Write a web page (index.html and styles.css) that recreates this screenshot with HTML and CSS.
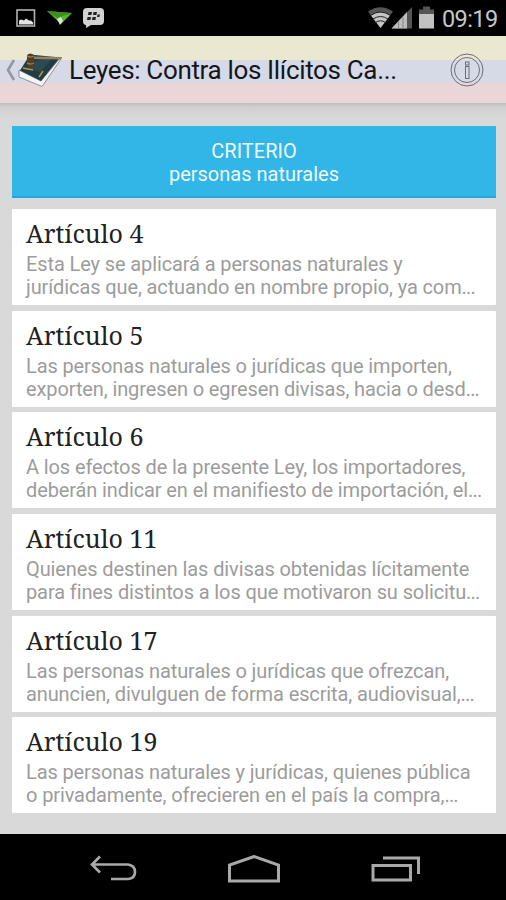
FILE: index.html
```html
<!DOCTYPE html>
<html lang="es">
<head>
    <meta charset="UTF-8">
    <meta name="viewport" content="width=device-width, initial-scale=1.0">
    <title>Leyes</title>
    <link rel="stylesheet" href="styles.css">
</head>
<body>
    <div class="status-bar">
        <svg class="status-left" width="110" height="36" viewBox="0 0 110 36">
            <rect x="17" y="10" width="17.500" height="16" fill="none" stroke="#b4b4b4" stroke-width="1.6"/>
            <path d="M19 24.500v-4l2-1 3 1 2-2 3 2 2 0 2 2v2z" fill="#e4e4e4"/>
            <path d="M47 11l25 2-11 11z" fill="#54b52c"/>
            <path d="M47 11l25 2-15 5z" fill="#3d8d20"/>
            <path d="M57 19l4-2 2 4-3 4z" fill="#d5e8d0"/>
            <path d="M87 8h13q4 0 4 4v9q0 4-4 4h-9l-5 3v-3q-3 0-3-4v-9q0-4 4-4z" fill="#d2d2d2"/>
            <path d="M88.500 12h3.500l-.6 3H88zM93.500 12H97l-.6 3H93zM87.500 17H91l-.6 3H87zM92.500 17H96l-.6 3H92zM97.500 14.500h2.500l-.6 2.500H97z" fill="#222"/>
        </svg>
        <div class="status-right">
            <svg width="72" height="36" viewBox="0 0 72 36">
                <path d="M2 11.500Q14.500 3 27 11.500L14.500 28z" fill="#555"/>
                <path d="M5 15.500Q14.500 9 24 15.500L14.500 28z" fill="#c4c4c4"/>
                <path d="M4.500 15.500Q14.500 8.500 24.500 15.500M7 19Q14.500 14 22 19M9.500 22.500Q14.500 19 19.500 22.500" fill="none" stroke="#222" stroke-width="1"/>
                <path d="M25.500 28.500L46 7v21.500z" fill="#555"/>
                <path d="M25.500 28.500L41 12v16.500z" fill="#bdbdbd"/>
                <path d="M32.500 21v7.500M37 17v11.500" stroke="#888" stroke-width="1"/>
                <path d="M57 6.500h7v3h4v5H53v-5h4z" fill="#555"/>
                <path d="M53 14h15v14.500H53z" fill="#c2c2c2"/>
            </svg>
            <span class="clock">09:19</span>
        </div>
    </div>

    <header class="action-bar">
        <svg class="logo" width="66" height="67" viewBox="0 0 66 67">
            <path d="M14 24q-3 5-6 10 3 5 6 10" fill="none" stroke="#9496a3" stroke-width="2.600"/>
            <path d="M19 34l22 11 20-24v2L42 50.500 19 41z" fill="#f4f4f6" stroke="#777c83" stroke-width=".8"/>
            <path d="M20 34.500l10-16 30 3L41 45z" fill="#253b43"/>
            <path d="M32 27l11-5 8 2-11 12-11-3z" fill="#2e4950"/>
            <path d="M34 20.500l28 .5-1 2.500-27-.5z" fill="#94805c"/>
            <path d="M27 19q3-3 7 0v11q-4 3-7 0z" fill="#4d4022"/>
            <path d="M27 20q4 2 7 0M27 27q4 2 7 0" fill="none" stroke="#a07c38" stroke-width="1.500"/>
            <path d="M23 32l10 2M39 41l4-6" stroke="#b49547" stroke-width="1.500"/>
        </svg>
        <h1>Leyes: Contra los Ilícitos Ca...</h1>
        <svg class="info" width="36" height="36" viewBox="0 0 36 36">
            <g fill="none" stroke="#6a6e78" stroke-width="1">
                <circle cx="18" cy="18" r="16"/>
                <circle cx="18" cy="18" r="12.500"/>
                <rect x="16.500" y="14.500" width="3.500" height="12"/>
                <rect x="16.500" y="10" width="3.500" height="3"/>
            </g>
        </svg>
    </header>

    <main>
        <div class="criterio">
            <span>CRITERIO</span>
            <span>personas naturales</span>
        </div>
        <div class="lista">
            <article class="card">
                <h2>Artículo 4</h2>
                <p>Esta Ley se aplicará a personas naturales y<br>jurídicas que, actuando en nombre propio, ya com<span class="dots">...</span></p>
            </article>
            <article class="card">
                <h2>Artículo 5</h2>
                <p>Las personas naturales o jurídicas que importen,<br>exporten, ingresen o egresen divisas, hacia o desd<span class="dots">...</span></p>
            </article>
            <article class="card">
                <h2>Artículo 6</h2>
                <p>A los efectos de la presente Ley, los importadores,<br>deberán indicar en el manifiesto de importación, el<span class="dots">...</span></p>
            </article>
            <article class="card">
                <h2>Artículo 11</h2>
                <p>Quienes destinen las divisas obtenidas lícitamente<br>para fines distintos a los que motivaron su solicitu<span class="dots">...</span></p>
            </article>
            <article class="card">
                <h2>Artículo 17</h2>
                <p>Las personas naturales o jurídicas que ofrezcan,<br>anuncien, divulguen de forma escrita, audiovisual,<span class="dots">...</span></p>
            </article>
            <article class="card">
                <h2>Artículo 19</h2>
                <p>Las personas naturales y jurídicas, quienes pública<br>o privadamente, ofrecieren en el país la compra,<span class="dots">...</span></p>
            </article>
        </div>
    </main>

    <nav class="nav-bar">
        <svg width="48" height="30" viewBox="0 0 48 30">
            <path d="M11 1.500L3 9.500l8 8M3 9.500h36q7 1 7 7.500t-7 7H22" fill="none" stroke="#a9a9a9" stroke-width="2.700"/>
        </svg>
        <svg width="54" height="30" viewBox="0 0 54 30">
            <path d="M2.500 26V10L27 1.500 51.500 10v16z" fill="none" stroke="#a9a9a9" stroke-width="3"/>
        </svg>
        <svg width="50" height="30" viewBox="0 0 50 30">
            <path d="M2 10.500h37.500V25H2zM12 3h35.500v16" fill="none" stroke="#a9a9a9" stroke-width="3"/>
        </svg>
    </nav>
</body>
</html>
```
FILE: styles.css
```css
* {
    box-sizing: border-box;
}

body {
    margin: 0;
    height: 900px;
    display: flex;
    flex-direction: column;
    font-family: Roboto, sans-serif;
    background-color: #d9d9d9;
    overflow: hidden;
}

svg {
    display: block;
    flex-shrink: 0;
}

.status-bar {
    height: 36px;
    display: flex;
    justify-content: space-between;
    background-color: #000;
}

.status-right {
    display: flex;
    align-items: center;
    padding-right: 8px;
}

.clock {
    width: 56px;
    margin-left: 4px;
    padding-top: 2px;
    font-size: 23.5px;
    line-height: 34px;
    letter-spacing: -0.6px;
    color: #c6c6c6;
    white-space: nowrap;
}

/* Barra con los tres colores */
.action-bar {
    height: 67px;
    display: flex;
    align-items: center;
    padding-right: 21px;
    background: linear-gradient(#ebe8d2 24px, #d6dae7 24px, #d6dae7 47px, #ead6d8 47px);
}

h1 {
    flex: 1;
    margin: 0 0 0 3px;
    font-size: 26px;
    font-weight: 400;
    letter-spacing: -0.34px;
    color: #15151b;
    white-space: nowrap;
}

main {
    flex: 1;
    padding: 23px 10px 0 12px;
    background: linear-gradient(#bdbdbd, #d0d0d0 4px, #d9d9d9 16px);
}

.criterio {
    height: 72px;
    display: flex;
    flex-direction: column;
    align-items: center;
    padding-top: 14px;
    font-size: 20px;
    line-height: 23px;
    color: #effaff;
    background-color: #32b5e7;
    border-bottom: 2px solid #21a9df;
}

.lista {
    display: flex;
    flex-direction: column;
    gap: 5.7px;
    margin-top: 11px;
}

.card {
    height: 96px;
    padding: 7px 0 0 14px;
    background-color: #fff;
    border-radius: 1px;
}

h2 {
    margin: 0;
    font-family: "Noto Serif", "DejaVu Serif Condensed", "DejaVu Serif", serif;
    font-size: 25px;
    font-weight: 400;
    line-height: 34px;
    letter-spacing: 0.05px;
    color: #222;
}

.card p {
    margin: 3px 0 0;
    font-size: 20px;
    line-height: 23px;
    letter-spacing: -0.11px;
    color: #9c9c9c;
    white-space: nowrap;
}

.card .dots {
    letter-spacing: -0.8px;
}

.nav-bar {
    height: 66px;
    display: flex;
    justify-content: space-between;
    align-items: center;
    padding: 5px 85px 0 89px;
    background-color: #000;
}
```
